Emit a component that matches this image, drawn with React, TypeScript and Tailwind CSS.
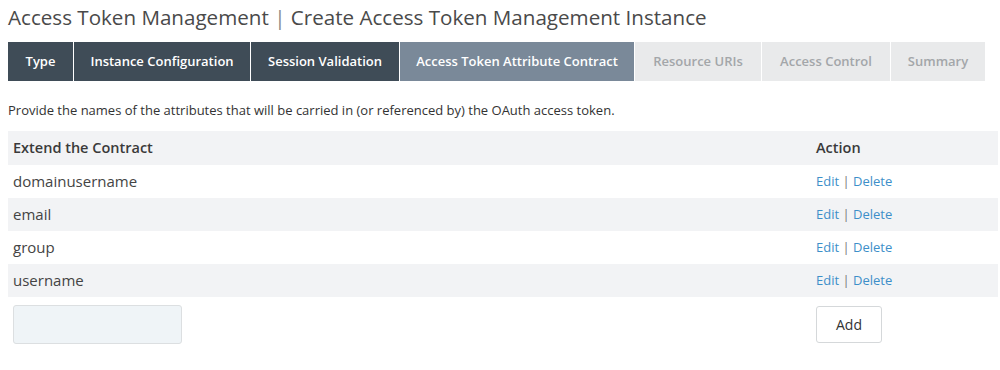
const tabs = [
  { label: 'Type', w: 'w-[65px]', state: 'done' },
  { label: 'Instance Configuration', w: 'w-[176px]', state: 'done' },
  { label: 'Session Validation', w: 'w-[148px]', state: 'done' },
  { label: 'Access Token Attribute Contract', w: 'w-[234px]', state: 'active' },
  { label: 'Resource URIs', w: 'w-[126px]', state: 'todo' },
  { label: 'Access Control', w: 'w-[128px]', state: 'todo' },
  { label: 'Summary', w: 'w-[94px]', state: 'todo' },
]

const attributes = ['domainusername', 'email', 'group', 'username']

const tabColor: Record<string, string> = {
  done: 'bg-[#3f4c57] text-white',
  active: 'bg-[#7a8999] text-white',
  todo: 'bg-[#e9eaeb] text-[#a3a6a9]',
}

export default function App() {
  return (
    <div className="min-h-[370px] bg-white px-2 font-['Open_Sans',sans-serif] text-[#333]">
      <h1 className="pt-[4px] text-[20.6px] leading-[26px] text-[#4a4a4a]">
        Access Token Management <span className="text-[#888]">|</span> Create Access Token Management Instance
      </h1>

      <div className="mt-[12px] flex gap-px">
        {tabs.map((t) => (
          <div
            key={t.label}
            className={`${t.w} ${tabColor[t.state]} flex h-[39px] items-center justify-center text-[13px] font-semibold`}
          >
            {t.label}
          </div>
        ))}
      </div>

      <p className="mt-[21px] text-[13px] leading-[16px]">
        Provide the names of the attributes that will be carried in (or referenced by) the OAuth access token.
      </p>

      <div className="mt-[13px] w-[990px]">
        <div className="flex h-[34px] items-center bg-[#f2f3f5] text-[14.5px] font-semibold text-[#3a3a3a]">
          <div className="flex-1 pl-[5px]">Extend the Contract</div>
          <div className="w-[182px]">Action</div>
        </div>
        {attributes.map((a, i) => (
          <div
            key={a}
            className={`flex h-[33px] items-center ${i % 2 === 1 ? 'bg-[#f2f3f5]' : 'bg-white'}`}
          >
            <div className="flex-1 pl-[5px] text-[15px] text-[#444]">{a}</div>
            <div className="w-[182px] text-[13px] text-[#3d8fc9]">
              Edit <span className="text-[#777]">|</span> Delete
            </div>
          </div>
        ))}
        <div className="flex items-center pt-[8px]">
          <div className="flex-1 pl-[5px]">
            <input className="h-[39px] w-[169px] rounded-[3px] border border-[#dcdfe1] bg-[#eff4f7]" />
          </div>
          <div className="w-[182px]">
            <button className="h-[37px] w-[66px] rounded-[3px] border border-[#d5d8da] bg-white text-[14px] text-[#333]">
              Add
            </button>
          </div>
        </div>
      </div>
    </div>
  )
}
